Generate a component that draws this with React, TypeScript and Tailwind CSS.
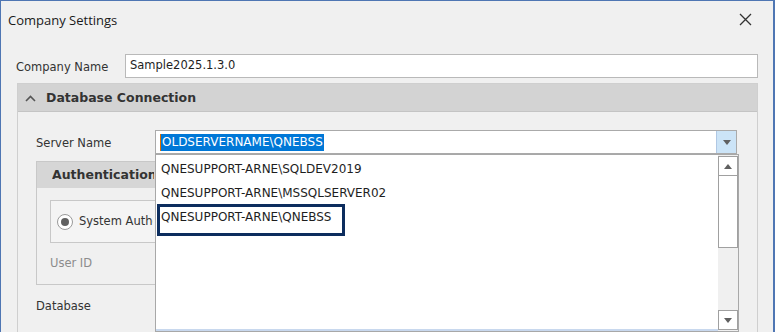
import React from "react";

const F = { fontFamily: '"DejaVu Sans", Verdana, sans-serif' };

function Arrow({ up = false }: { up?: boolean }) {
  return (
    <svg width="8" height="5" viewBox="0 0 8 5">
      {up ? <path d="M0 5 L4 0 L8 5 Z" fill="#606060" /> : <path d="M0 0 L8 0 L4 5 Z" fill="#606060" />}
    </svg>
  );
}

export default function App() {
  return (
    <div
      className="relative w-[775px] h-[332px] overflow-hidden bg-[#f0f0f0] border-l border-r-2 border-t border-[#4f76b3] text-[#1e1e1e]"
      style={F}
    >
      {/* title bar */}
      <div className="h-[39px] flex items-center justify-between pl-[7px] pr-[21px]">
        <span className="text-[13px] text-[#1a1a1a]" style={{ fontFamily: '"Open Sans", sans-serif' }}>
          Company Settings
        </span>
        <svg width="13" height="13" viewBox="0 0 13 13" className="mt-[-2px]">
          <path d="M1 1 L12 12 M12 1 L1 12" stroke="#333" strokeWidth="1.3" />
        </svg>
      </div>

      {/* company name row */}
      <div className="mt-[14px] flex items-center h-[24px] pl-[15px] pr-[15px]">
        <span className="w-[109px] pt-[4px] text-[11.5px] text-[#333]">Company Name</span>
        <div className="flex-1 h-[24px] bg-white border border-[#b9b9b9] flex items-center pl-[4px] text-[11.5px]">
          Sample2025.1.3.0
        </div>
      </div>

      {/* Database Connection group */}
      <div className="mt-[5px] ml-[16px] mr-[15px] h-[260px] border border-[#cfcfcf] border-b-0 flex flex-col">
        <div className="h-[28px] bg-[#d3d3d3] flex items-center pl-[7px] border-b border-[#c4c4c4]">
          <svg width="11" height="7" viewBox="0 0 11 7" className="mr-[10px] mt-[1px]">
            <path d="M1 6 L5.5 1.5 L10 6" stroke="#555" strokeWidth="1.6" fill="none" />
          </svg>
          <span className="font-bold text-[12.5px] text-[#333] pt-[1px]">Database Connection</span>
        </div>
        <div className="flex-1 pl-[18px] pr-[20px] pt-[18px] flex flex-col">
          {/* server name */}
          <div className="flex items-center h-[24px]">
            <span className="w-[119px] pt-[4px] text-[11.5px] text-[#333]">Server Name</span>
            <div className="flex-1 h-[24px] bg-white border border-[#aaaaaa] flex items-center">
              <div className="flex-1 flex items-center pl-[4px]">
                <span className="bg-[#0078d7] text-white text-[12px] leading-[17px] px-[1px] border-l border-[#e07000]">
                  OLDSERVERNAME\QNEBSS
                </span>
              </div>
              <div className="w-[20px] h-full bg-[#cce4f7] border-l border-[#b0c8e4] flex items-center justify-center">
                <Arrow />
              </div>
            </div>
          </div>

          {/* Authentication group */}
          <div className="mt-[7px] h-[124px] w-[640px] border border-[#c8c8c8] flex flex-col">
            <div className="h-[26px] bg-[#d6d6d6] flex items-center pl-[15px]">
              <span className="font-bold text-[12.5px] text-[#333] w-[102px] overflow-hidden whitespace-nowrap">Authentication</span>
            </div>
            <div className="flex-1 pl-[13px] pt-[12px] flex flex-col">
              <div className="h-[43px] w-[400px] border border-[#c8c8c8] bg-[#f4f4f4] flex items-center pl-[6px]">
                <div className="w-[16px] h-[16px] rounded-full border border-[#9a9a9a] bg-white flex items-center justify-center">
                  <div className="w-[8px] h-[8px] rounded-full bg-[#606060]" />
                </div>
                <span className="ml-[6px] text-[11.5px] text-[#333] w-[74px] overflow-hidden whitespace-nowrap">System Authentication</span>
              </div>
              <span className="mt-[13px] text-[11.5px] text-[#8c8c8c] leading-[14px]">User ID</span>
            </div>
          </div>

          <span className="mt-[14px] text-[11.5px] text-[#333] leading-[14px]">Database</span>
        </div>
      </div>

      {/* dropdown popup */}
      <div className="absolute left-[154px] top-[153px] w-[584px] h-[178px] bg-white border border-[#a8a8a8] flex">
        <div className="flex-1 flex flex-col pt-[2px] pl-[5px] border-b-2 border-[#c8d8ee]">
          <div className="h-[24px] flex items-center text-[12px]">QNESUPPORT-ARNE\SQLDEV2019</div>
          <div className="h-[24px] flex items-center text-[12px]">QNESUPPORT-ARNE\MSSQLSERVER02</div>
          <div className="h-[24px] flex items-center text-[12px]">QNESUPPORT-ARNE\QNEBSS</div>
        </div>
        <div className="w-[20px] bg-[#f0f0f0] flex flex-col pt-[1px] pb-[1px]">
          <div className="h-[20px] border border-[#a0a0a0] bg-white flex items-center justify-center">
            <Arrow up />
          </div>
          <div className="h-[72px] border border-[#a0a0a0] border-t-0 bg-white" />
          <div className="flex-1" />
          <div className="h-[20px] border border-[#a0a0a0] bg-white flex items-center justify-center">
            <Arrow />
          </div>
        </div>
        {/* highlight annotation box */}
        <div className="absolute left-[1px] top-[49px] w-[188px] h-[32px] border-[3px] border-[#0c2d5e] pointer-events-none" />
      </div>
    </div>
  );
}
